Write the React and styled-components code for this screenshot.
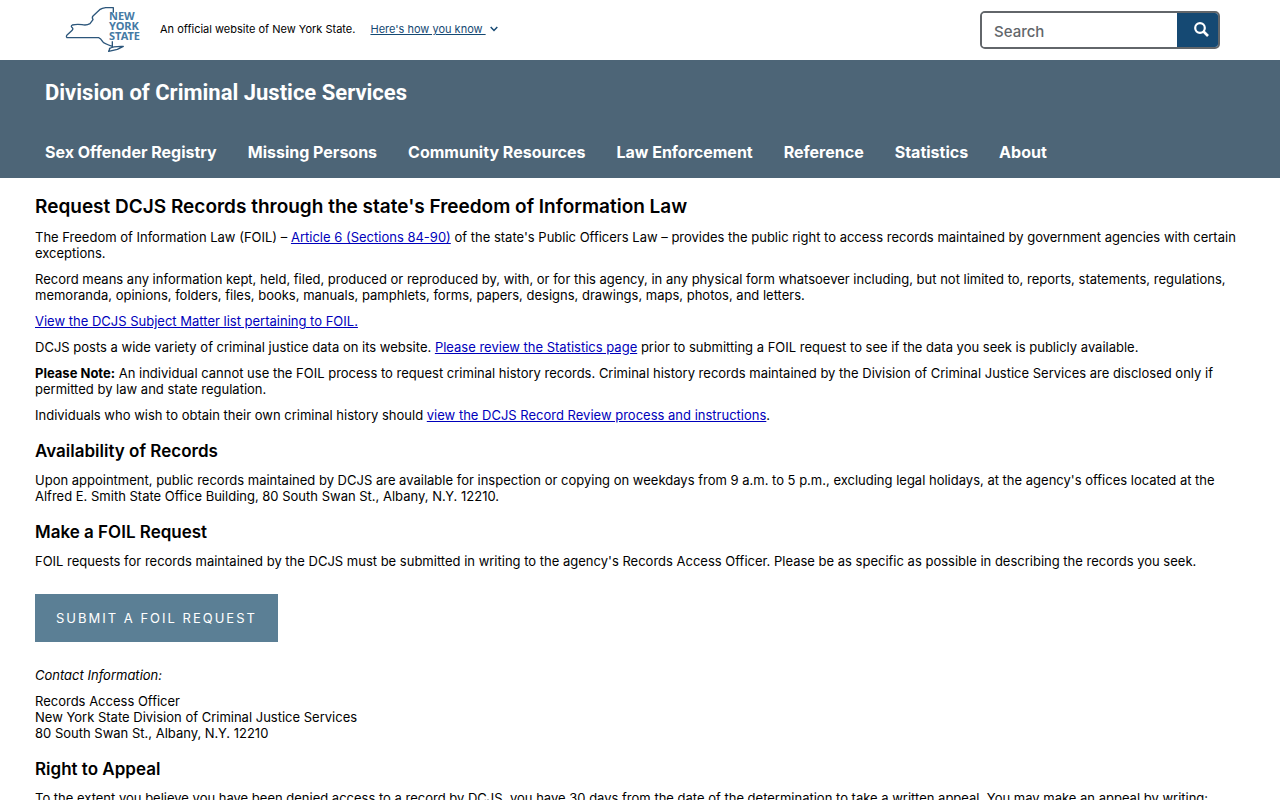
import React from "react";
import styled, { createGlobalStyle } from "styled-components";

const GlobalStyle = createGlobalStyle`
  *, *::before, *::after { box-sizing: border-box; }
  body {
    margin: 0;
    background: #fff;
    color: #000;
    font-family: Inter, "Liberation Sans", sans-serif;
    font-size: 13px;
    line-height: 16px;
  }
`;

const TopBar = styled.div`
  display: flex;
  align-items: center;
  height: 60px;
  padding: 0 60px;
`;

const LogoLink = styled.a`
  display: block;
  width: 90px;
  height: 60px;
`;

const Official = styled.p`
  margin: 0 0 0 10px;
  padding-bottom: 2px;
  font-size: 11px;
`;

const KnowLink = styled.a`
  display: flex;
  align-items: center;
  gap: 4px;
  margin-left: 15px;
  padding-bottom: 2px;
  font-size: 11px;
  color: #154973;
  text-decoration: none;
  span { text-decoration: underline; white-space: pre; }
`;

const SearchForm = styled.form`
  display: flex;
  width: 240px;
  height: 38px;
  margin-left: auto;
  border: 2px solid #62666a;
  border-radius: 5px;
  overflow: hidden;
`;

const SearchInput = styled.input`
  flex: 1;
  min-width: 0;
  border: 0;
  outline: 0;
  padding: 2px 12px 0;
  font: 500 15px Inter, sans-serif;
  &::placeholder { color: #62666a; opacity: 1; }
`;

const SearchButton = styled.button`
  display: flex;
  align-items: center;
  justify-content: center;
  width: 41px;
  padding: 0 0 2px 8px;
  border: 0;
  background: #154973;
`;

const Header = styled.header`
  background: #4d6577;
  color: #fff;
  padding: 20px 45px 16px;
`;

const SiteName = styled.a`
  display: block;
  color: inherit;
  text-decoration: none;
  font: 700 22px/26px Roboto, sans-serif;
`;

const Nav = styled.nav`
  display: flex;
  flex-wrap: wrap;
  gap: 31px;
  margin-top: 36px;
`;

const NavLink = styled.a`
  color: inherit;
  text-decoration: none;
  font-size: 16px;
  font-weight: 700;
  line-height: 20px;
`;

const Main = styled.main`
  padding: 17px 35px;
`;

const Title = styled.h1`
  margin: 0 0 10px;
  font-size: 19px;
  font-weight: 600;
  line-height: 24px;
`;

const Heading = styled.h2`
  margin: 17px 0 10px;
  font-size: 17px;
  font-weight: 600;
  line-height: 22px;
`;

const Text = styled.p`
  margin: 0 0 10px;
`;

const Link = styled.a`
  color: #00b;
  text-decoration: underline;
`;

const SubmitButton = styled.button`
  display: block;
  height: 48px;
  margin: 25px 0;
  padding: 0 21px;
  border: 0;
  background: #5b7f95;
  color: #fff;
  font: 400 13px Inter, sans-serif;
  letter-spacing: 2px;
  text-transform: uppercase;
`;

const sections = [
  "Sex Offender Registry", "Missing Persons", "Community Resources",
  "Law Enforcement", "Reference", "Statistics", "About",
];

function Logo() {
  return (
    <svg viewBox="0 0 270 180" width="90" height="60" role="img" aria-label="New York State">
      <path d="M160 38V23H137Q126 24 119 29L99 48Q95 52 99 59L90 71Q80 77 66 74Q50 72 37 75Q31 78 37 83Q41 87 35 92L22 104Q17 110 21 113H116Q122 115 128 125Q132 131 157 139V124M147 146Q160 138 190 139L172 148L146 154L150 145" fill="none" stroke="#2c567b" strokeWidth="4" strokeLinejoin="round" />
      <g fill="#457aa5" fontFamily="Noto Sans, sans-serif" fontWeight="700" fontSize="33">
        <text x="147" y="61">NEW</text>
        <text x="147" y="91">YORK</text>
        <text x="147" y="120">STATE</text>
      </g>
    </svg>
  );
}

export default function App() {
  return (
    <>
      <GlobalStyle />
      <TopBar>
        <LogoLink href="#"><Logo /></LogoLink>
        <Official>An official website of New York State.</Official>
        <KnowLink href="#">
          <span>Here's how you know </span>
          <svg width="8" height="6" viewBox="0 0 8 6" fill="none" stroke="currentColor" strokeWidth="1.5"><path d="M.7 1L4 4.4L7.3 1" /></svg>
        </KnowLink>
        <SearchForm role="search">
          <SearchInput type="text" placeholder="Search" aria-label="Search" />
          <SearchButton type="button" aria-label="Submit search">
            <svg width="15" height="15" viewBox="0 0 15 15" fill="none" stroke="#fff"><circle cx="6" cy="6" r="4.8" strokeWidth="2.2" /><path d="M9.5 9.5L14 14" strokeWidth="2.6" /></svg>
          </SearchButton>
        </SearchForm>
      </TopBar>
      <Header>
        <SiteName href="#">Division of Criminal Justice Services</SiteName>
        <Nav>{sections.map((s) => <NavLink key={s} href="#">{s}</NavLink>)}</Nav>
      </Header>
      <Main>
        <Title>Request DCJS Records through the state's Freedom of Information Law</Title>
        <Text>The Freedom of Information Law (FOIL) – <Link href="#">Article 6 (Sections 84-90)</Link> of the state's Public Officers Law – provides the public right to access records maintained by government agencies with certain exceptions.</Text>
        <Text>Record means any information kept, held, filed, produced or reproduced by, with, or for this agency, in any physical form whatsoever including, but not limited to, reports, statements, regulations, memoranda, opinions, folders, files, books, manuals, pamphlets, forms, papers, designs, drawings, maps, photos, and letters.</Text>
        <Text><Link href="#">View the DCJS Subject Matter list pertaining to FOIL.</Link></Text>
        <Text>DCJS posts a wide variety of criminal justice data on its website. <Link href="#">Please review the Statistics page</Link> prior to submitting a FOIL request to see if the data you seek is publicly available.</Text>
        <Text><strong>Please Note:</strong> An individual cannot use the FOIL process to request criminal history records. Criminal history records maintained by the Division of Criminal Justice Services are disclosed only if permitted by law and state regulation.</Text>
        <Text>Individuals who wish to obtain their own criminal history should <Link href="#">view the DCJS Record Review process and instructions</Link>.</Text>
        <Heading>Availability of Records</Heading>
        <Text>Upon appointment, public records maintained by DCJS are available for inspection or copying on weekdays from 9 a.m. to 5 p.m., excluding legal holidays, at the agency's offices located at the Alfred E. Smith State Office Building, 80 South Swan St., Albany, N.Y. 12210.</Text>
        <Heading>Make a FOIL Request</Heading>
        <Text>FOIL requests for records maintained by the DCJS must be submitted in writing to the agency's Records Access Officer. Please be as specific as possible in describing the records you seek.</Text>
        <SubmitButton type="button">Submit a FOIL Request</SubmitButton>
        <Text><em>Contact Information:</em></Text>
        <Text>Records Access Officer<br />New York State Division of Criminal Justice Services<br />80 South Swan St., Albany, N.Y. 12210</Text>
        <Heading>Right to Appeal</Heading>
        <Text>To the extent you believe you have been denied access to a record by DCJS, you have 30 days from the date of the determination to take a written appeal. You may make an appeal by writing:</Text>
      </Main>
    </>
  );
}
